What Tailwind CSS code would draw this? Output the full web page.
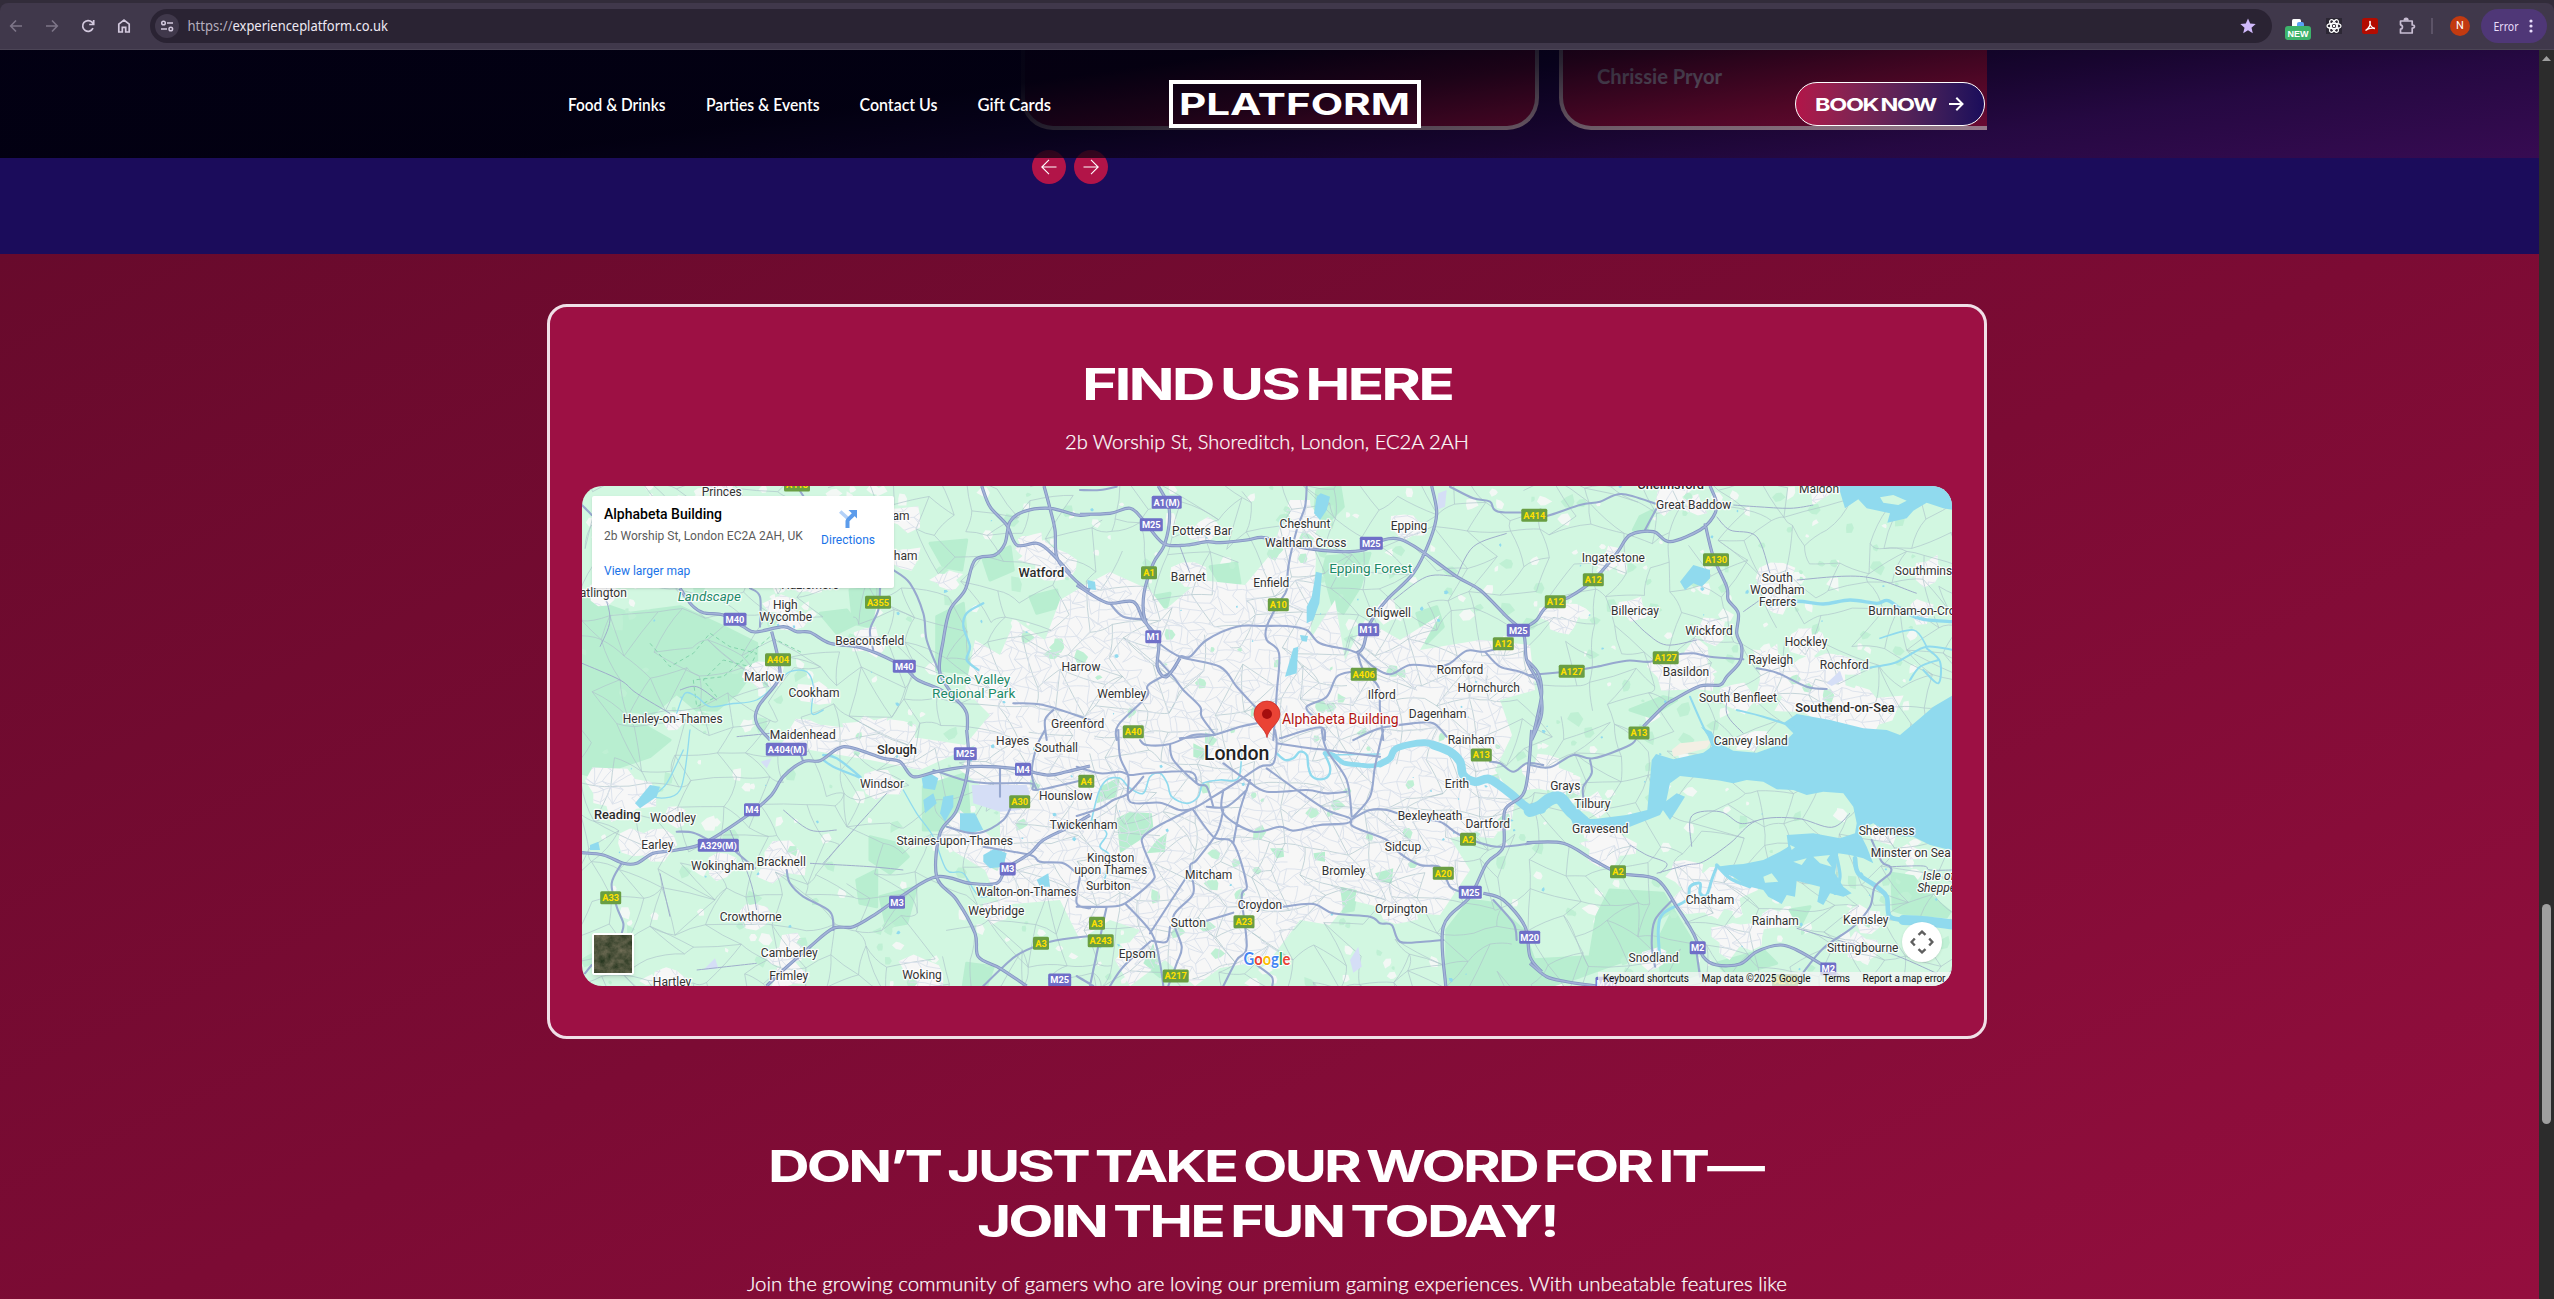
<!DOCTYPE html>
<html lang="en">
<head>
<meta charset="utf-8">
<title>Platform</title>
<script src="https://cdn.jsdelivr.net/npm/@tailwindcss/browser@4"></script>
</head>
<body class="w-[2554px] h-[1299px] overflow-hidden bg-[#6a0a2d] flex flex-col font-['Lato',sans-serif] text-white">

<!-- Browser toolbar -->
<div class="h-[50px] shrink-0 bg-[#322c3a] pt-[3px]">
  <div class="h-[47px] bg-[#40384b] border-b border-[#4c4556] rounded-t-lg flex items-center pl-2 pr-[6px]">
    <div class="flex items-center gap-5 pb-px">
      <svg class="w-4 h-4" viewBox="0 0 16 16" fill="none" stroke="#7d7588" stroke-width="1.6"><path d="M14 8H3M8 2.5 2.7 8 8 13.500"/></svg>
      <svg class="w-4 h-4" viewBox="0 0 16 16" fill="none" stroke="#7d7588" stroke-width="1.6"><path d="M2 8h11M8 2.500 13.300 8 8 13.500"/></svg>
      <svg class="w-4 h-4" viewBox="0 0 16 16" fill="none" stroke="#d3c9de" stroke-width="1.700"><path d="M13 10.200A5.400 5.400 0 1 1 12 4.200L13.500 6M13.700 2v4.500H9.200"/></svg>
      <svg class="w-4 h-4" viewBox="0 0 16 16" fill="none" stroke="#d3c9de" stroke-width="1.700"><path d="M2.800 14V6.200L8 2l5.200 4.200V14H9.700V9.300H6.300V14z"/></svg>
    </div>
    <div class="ml-[18px] w-[2122px] h-[34px] rounded-full bg-[#2a2333] flex items-center pl-[5px] pr-4 mb-px">
      <div class="w-6 h-6 rounded-full bg-[#40384b] flex items-center justify-center">
        <svg class="w-4 h-4" viewBox="0 0 16 16" fill="none" stroke="#d3c9de" stroke-width="1.500"><circle cx="4.500" cy="5" r="1.800"/><path d="M8 5h6M2 11h6"/><circle cx="11.800" cy="11" r="1.800"/></svg>
      </div>
      <svg class="w-[220px] h-6 ml-[8px] overflow-visible" viewBox="0 0 220 24" font-family="Noto Sans, sans-serif" font-size="13.500"><text x="0.500" y="17" fill="#b5aebd" textLength="45" lengthAdjust="spacingAndGlyphs">https://</text><text x="45.500" y="17" fill="#eee9f3" textLength="155.500" lengthAdjust="spacingAndGlyphs">experienceplatform.co.uk</text></svg>
      <svg class="w-4 h-4 ml-auto" viewBox="0 0 16 16" fill="#d0b9fb"><path d="M8 0.500l2.200 5.100 5.500.5-4.200 3.600 1.300 5.500L8 12.300l-4.800 2.900 1.300-5.500L.3 6.100l5.500-.5z"/></svg>
    </div>
    <div class="ml-[13px] flex items-center">
      <svg class="w-[26px] h-6 mt-[7px]" viewBox="0 0 26 24"><rect x="7" y="1" width="9" height="9" rx="1.500" fill="#fff"/><rect x="12" y="4" width="7" height="8" rx="2" fill="#5aa2f5"/><rect y="8" width="26" height="14" rx="3" fill="#3db36b"/><text x="13" y="18.800" fill="#fff" text-anchor="middle" font-family="Liberation Sans, sans-serif" font-weight="700" font-size="9.500" textLength="21" lengthAdjust="spacingAndGlyphs">NEW</text></svg>
      <svg class="w-4 h-4 ml-[15px]" viewBox="0 0 16 16"><rect width="16" height="16" fill="#2c2734"/><g fill="none" stroke="#fff" stroke-width="1.200"><ellipse cx="8" cy="8" rx="7" ry="2.700"/><ellipse cx="8" cy="8" rx="7" ry="2.700" transform="rotate(60 8 8)"/><ellipse cx="8" cy="8" rx="7" ry="2.700" transform="rotate(120 8 8)"/></g><circle cx="8" cy="8" r="1.200" fill="#fff"/></svg>
      <svg class="w-4 h-4 ml-5" viewBox="0 0 16 16"><rect width="16" height="16" rx="2.500" fill="#b30b00"/><path d="M8 3c1.200 3-1 7.500-4.500 9.500M8 3c-1 3 1 6.500 5 7.500-3.500-.8-6.500 0-9.500 2" fill="none" stroke="#fff" stroke-width="1.300"/></svg>
      <svg class="w-[18px] h-[18px] ml-5" viewBox="0 0 18 18" fill="none" stroke="#c8bdd3" stroke-width="1.700"><path d="M2.500 4h11.700v4c3 0 3 3 0 3v5H2.500v-3.800c2.600-.3 2.600-4.100 0-4.400z" stroke-linejoin="round"/><path d="M6.300 3.500c0-3 3.600-3 3.600 0" fill="#c8bdd3"/></svg>
      <div class="ml-[15px] w-[2px] h-4 bg-[#5c5367]"></div>
      <div class="ml-[17px] w-5 h-5 rounded-full bg-[#c23a10] text-[11px] font-['Roboto',sans-serif] flex items-center justify-center">N</div>
      <div class="ml-[11px] w-[66px] h-[34px] mb-px rounded-full bg-[#4f3777] flex items-center pl-3">
        <svg class="w-[26px] h-5 overflow-visible" viewBox="0 0 26 20"><text x="0.500" y="14.500" fill="#e9ddfb" font-family="Noto Sans, sans-serif" font-size="13" textLength="25" lengthAdjust="spacingAndGlyphs">Error</text></svg>
        <svg class="w-1 h-4 ml-[10px]" viewBox="0 0 4 16" fill="#e9ddfb"><circle cx="2" cy="3" r="1.600"/><circle cx="2" cy="8" r="1.600"/><circle cx="2" cy="13" r="1.600"/></svg>
      </div>
    </div>
  </div>
</div>

<div class="flex h-[1249px]">
  <div class="w-[2539px] relative">

    <!-- Testimonial slider end -->
    <section class="h-[204px] bg-[#1b0c5b] relative overflow-hidden">
      <div class="ml-[1021px] w-[966px] h-20 overflow-hidden flex gap-5">
        <div class="w-[518px] shrink-0 h-20 rounded-b-[32px] border-4 border-t-0 border-[#f0e0e7] bg-[#9d1044]"></div>
        <div class="w-[518px] shrink-0 h-20 rounded-b-[32px] border-4 border-t-0 border-[#f0e0e7] bg-[#9d1044]">
          <svg class="w-40 h-10 ml-[34px] mt-[8px]" viewBox="0 0 160 40"><text x="0" y="26" fill="#e6dceb" font-family="Lato, sans-serif" font-weight="700" font-size="20" textLength="125" lengthAdjust="spacingAndGlyphs">Chrissie Pryor</text></svg>
        </div>
      </div>
      <div class="ml-[1032px] mt-5 flex gap-[8px]">
        <div class="w-[34px] h-[34px] rounded-full bg-[#b21448] flex items-center justify-center"><svg class="w-4 h-4" viewBox="0 0 16 16" fill="none" stroke="#fff" stroke-width="1.100"><path d="M15.500 8H.8M8 .8.8 8 8 15.200"/></svg></div>
        <div class="w-[34px] h-[34px] rounded-full bg-[#b21448] flex items-center justify-center"><svg class="w-4 h-4" viewBox="0 0 16 16" fill="none" stroke="#fff" stroke-width="1.100"><path d="M.5 8h14.700M8 .8 15.200 8 8 15.200"/></svg></div>
      </div>
    </section>

    <!-- Sticky header laid over the slider -->
    <header class="absolute top-0 left-0 w-full h-[108px] bg-[linear-gradient(172deg,rgba(2,0,18,.99)_0%,rgba(2,0,16,.98)_38%,rgba(4,0,15,.84)_50%,rgba(22,0,16,.58)_66%,rgba(50,4,35,.45)_78%,rgba(107,9,66,.35)_100%)]">
      <div class="ml-[568px] w-[1417px] h-full flex items-center">
        <nav>
          <svg class="w-[490px] h-6 overflow-visible" viewBox="0 0 490 24" fill="#fff" font-family="Lato, sans-serif" font-weight="600" font-size="16.500"><text x="0" y="18.500" textLength="97.500" lengthAdjust="spacingAndGlyphs">Food &amp; Drinks</text><text x="138" y="18.500" textLength="113.500" lengthAdjust="spacingAndGlyphs">Parties &amp; Events</text><text x="291.500" y="18.500" textLength="78" lengthAdjust="spacingAndGlyphs">Contact Us</text><text x="409.500" y="18.500" textLength="73.500" lengthAdjust="spacingAndGlyphs">Gift Cards</text></svg>
        </nav>
        <div class="ml-[111px] w-[252px] h-[48px] border-4 border-white flex items-center justify-center">
          <svg class="w-[232px] h-8 overflow-visible" viewBox="0 0 232 32"><text x="0" y="27" fill="#fff" font-family="Inter, sans-serif" font-weight="700" font-size="30.500" textLength="231" lengthAdjust="spacingAndGlyphs">PLATFORM</text></svg>
        </div>
        <div class="ml-auto w-[190px] h-[44px] rounded-full border border-white bg-linear-to-r from-[#b21448] to-[#1b0c5b] flex items-center pl-[19px] pr-5 justify-between">
          <svg class="w-[122px] h-6 overflow-visible" viewBox="0 0 122 24"><text x="0" y="18.500" fill="#fff" font-family="Inter, sans-serif" font-weight="700" font-size="18" letter-spacing="-1" word-spacing="-1.500" textLength="121" lengthAdjust="spacingAndGlyphs">BOOK NOW</text></svg>
          <svg class="w-4 h-4" viewBox="0 0 16 16" fill="none" stroke="#fff" stroke-width="2"><path d="M1 8h13M8.300 1.800 14.500 8l-6.200 6.200"/></svg>
        </div>
      </div>
    </header>

    <section class="h-[1045px] bg-[linear-gradient(155deg,#680a2c_0%,#7c0b34_50%,#940e3e_100%)] flex flex-col items-center overflow-hidden">
      <div class="mt-[50px] -ml-[5px] w-[1440px] h-[735px] shrink-0 rounded-[20px] border-[3px] border-[#f0e0e7] bg-[#9d1044] flex flex-col items-center">
        <h2 class="mt-[52px]"><svg class="w-[370px] h-[56px] overflow-visible" viewBox="0 0 370 56"><text x="0" y="41" fill="#fff" font-family="Inter, sans-serif" font-weight="700" font-size="44.500" letter-spacing="-2.200" word-spacing="-3" textLength="370" lengthAdjust="spacingAndGlyphs">FIND US HERE</text></svg></h2>
        <p class="mt-[10px]"><svg class="w-[406px] h-8 overflow-visible" viewBox="0 0 406 32"><text x="1" y="24" fill="#fff" stroke="#fff" stroke-width=".25" font-family="Lato, sans-serif" font-weight="300" font-size="20.500" textLength="404" lengthAdjust="spacingAndGlyphs">2b Worship St, Shoreditch, London, EC2A 2AH</text></svg></p>

        <!-- Map -->
        <div class="mt-[29px] w-[1370px] h-[500px] rounded-[20px] overflow-hidden relative bg-[#d2f7e1]">
          <svg id="map" class="absolute inset-0 w-[1370px] h-[500px]" viewBox="582 486 1370 500" font-family="Roboto, sans-serif"></svg>

          <div class="absolute left-[10px] top-[10px] w-[302px] h-[92px] bg-white shadow-sm rounded-[2px] font-['Roboto',sans-serif] pl-3 pt-[9px] pr-[19px] flex justify-between">
            <div>
              <div class="text-[14px] leading-[18px] font-medium text-black">Alphabeta Building</div>
              <div class="mt-[5px] text-[12px] leading-4 text-[#5b5b5b]">2b Worship St, London EC2A 2AH, UK</div>
              <div class="mt-[19px] text-[12px] leading-4 text-[#1a73e8]">View larger map</div>
            </div>
            <div class="flex flex-col items-center pt-[5px]">
              <svg class="w-[18px] h-[18px]" viewBox="0 0 18 18" fill="none"><path d="M9.500 9 1.200 1.500" stroke="#b3d1f8" stroke-width="3.600"/><path d="M8.500 18v-7c0-1.500 5-5 6.800-7.500" stroke="#5c9ceb" stroke-width="4"/><path d="M9.500 0H18v8.500z" fill="#5c9ceb"/></svg>
              <div class="mt-[4px] text-[12px] leading-4 text-[#1a73e8]">Directions</div>
            </div>
          </div>

          <svg class="absolute left-[10px] top-[447px] w-[42px] h-[42px] shadow-md rounded-[2px]" viewBox="0 0 42 42"><filter id="sat" x="0" y="0" width="1" height="1" color-interpolation-filters="sRGB"><feTurbulence type="fractalNoise" baseFrequency=".13" numOctaves="4" seed="8"/><feColorMatrix values=".4 0 0 0 .11  .3 0 0 0 .18  .3 0 0 0 .09  0 0 0 0 1"/></filter><rect width="42" height="42" rx="2" fill="#fff"/><rect x="2" y="2" width="38" height="38" filter="url(#sat)"/></svg>

          <div class="absolute right-[10px] bottom-[24px] w-10 h-10 rounded-full bg-white shadow flex items-center justify-center"><svg class="w-6 h-6" viewBox="0 0 24 24" fill="none" stroke="#5f5f5f" stroke-width="2.400"><path d="M8.500 4.800 12 1.600l3.500 3.200M8.500 19.200l3.500 3.200 3.500-3.200M4.800 8.500 1.600 12l3.200 3.500M19.200 8.500l3.200 3.500-3.200 3.500"/></svg></div>

          <div class="absolute right-0 bottom-0 w-[354px] h-[14px] bg-[#f5f5f5]/75"><svg class="w-[354px] h-[14px]" viewBox="0 0 354 14" fill="#111" font-family="Roboto, sans-serif" font-size="10"><text x="5" y="10" textLength="86">Keyboard shortcuts</text><text x="103.500" y="10" textLength="109">Map data ©2025 Google</text><text x="225" y="10" textLength="27">Terms</text><text x="264.500" y="10" textLength="83">Report a map error</text></svg></div>
        </div>
      </div>

      <h2 class="mt-[92px] -ml-[8px]"><svg class="w-[1000px] h-[116px] overflow-visible" viewBox="0 0 1000 116" fill="#fff" font-family="Inter, sans-serif" font-weight="700" font-size="44.500" letter-spacing="-2.200" word-spacing="-3"><text x="2" y="50.500" textLength="994" lengthAdjust="spacingAndGlyphs">DON’T JUST TAKE OUR WORD FOR IT—</text><text x="211" y="105.500" textLength="580" lengthAdjust="spacingAndGlyphs">JOIN THE FUN TODAY!</text></svg></h2>
      <p class="mt-[18px] -ml-[6px]"><svg class="w-[1044px] h-[38px] overflow-visible" viewBox="0 0 1044 38"><text x="2" y="26" fill="#fff" stroke="#fff" stroke-width=".25" font-family="Lato, sans-serif" font-weight="300" font-size="20.500" textLength="1040" lengthAdjust="spacingAndGlyphs">Join the growing community of gamers who are loving our premium gaming experiences. With unbeatable features like</text></svg></p>
    </section>
  </div>

  <!-- Page scrollbar -->
  <div class="w-[15px] bg-[#2c2c2c] flex flex-col items-center">
    <svg class="w-[9px] h-[5px] mt-[6px]" viewBox="0 0 9 5" fill="#9f9f9f"><path d="M4.500 0 9 5H0z"/></svg>
    <div class="mt-[843px] w-[9px] h-[220px] rounded-full bg-[#9f9f9f]"></div>
  </div>
</div>

<script>
const svg = document.getElementById('map');
// Survey sheets: each sheet has its own origin and a 3:1 scale.
const SHEET = {A:[570,480],B:[1080,480],C:[1530,480],D:[570,730],E:[1080,730],F:[1530,730]};
let seed = 7;
const rnd = () => { seed = seed + 0x6D2B79F5 | 0; let t = Math.imul(seed ^ seed >>> 15, 1 | seed); t = t + Math.imul(t ^ t >>> 7, 61 | t) ^ t; return ((t ^ t >>> 14) >>> 0) / 4294967296; };
const at = (k, x, y) => [SHEET[k][0] + x / 3, SHEET[k][1] + y / 3];
const pts = s => s.slice(2).trim().split(/\s+/).map(p => { const [x, y] = p.split(',').map(Number); return at(s[0], x, y); });
const f = n => n.toFixed(1);
const straight = p => 'M' + p.map(q => f(q[0]) + ' ' + f(q[1])).join('L');
const smooth = p => {
  let d = 'M' + f(p[0][0]) + ' ' + f(p[0][1]);
  for (let i = 0; i < p.length - 1; i++) {
    const a = p[i - 1] || p[i], b = p[i], c = p[i + 1], e = p[i + 2] || c;
    d += 'C' + [b[0] + (c[0] - a[0]) / 6, b[1] + (c[1] - a[1]) / 6, c[0] - (e[0] - b[0]) / 6, c[1] - (e[1] - b[1]) / 6, c[0], c[1]].map(f).join(' ');
  }
  return d;
};
const blob = (x, y, r, n = 9, sq = 1) => { const p = []; for (let i = 0; i < n; i++) { const a = i / n * 6.283, q = r * (0.5 + rnd() * 0.75); p.push([x + Math.cos(a) * q, y + Math.sin(a) * q * sq]); } return straight(p) + 'Z'; };
const path = (d, a) => `<path d="${d}" ${a}/>`;

const towns = `B -7 744 Greenford|B 3 574 Harrow|A 455 48 Princes|A 993 121 am|A 1007 241 ham|A 720 327 Hazlemere|A 100 352 atlington|A 646 388 High|A 647 423 Wycombe|A 899 496 Beaconsfield|A 582 604 Marlow|A 732 652 Cookham|A 308 730 Henley-on-Thames|A 698 778 Maidenhead|B 366 166 Potters Bar|B 675 145 Cheshunt|B 677 201 Waltham Cross|B 987 151 Epping|B 325 304 Barnet|B 574 321 Enfield|B 925 411 Chigwell|B 1140 583 Romford|B 1226 637 Hornchurch|B 905 658 Ilford|B 1073 715 Dagenham|B 125 655 Wembley|C 491 87 Great Baddow|C 867 40 Maldon|C 250 247 Ingatestone|C 742 307 South|C 742 342 Woodham|C 743 378 Ferrers|C 1202 286 Southminster|C 315 406 Billericay|C 1175 406 Burnham-on-Crouch|C 537 465 Wickford|C 828 499 Hockley|C 722 552 Rayleigh|C 943 567 Rochford|C 468 588 Basildon|C 624 667 South Benfleet|F 662 45 Canvey Island|D 1328 46 Hayes|D 1459 66 Southall|D 936 174 Windsor|E -43 210 Hounslow|D 309 277 Woodley|D 262 357 Earley|D 458 420 Wokingham|D 634 408 Bracknell|D 1154 345 Staines-upon-Thames|E 11 297 Twickenham|D 1369 498 Walton-on-Thames|D 1279 555 Weybridge|D 542 573 Crowthorne|D 658 681 Camberley|D 656 750 Frimley|D 1056 747 Woking|D 306 767 Hartley|E 1131 174 Erith|E 1174 43 Rainham|E 1050 271 Bexleyheath|E 1223 294 Dartford|E 969 363 Sidcup|E 92 396 Kingston|E 92 432 upon Thames|E 85 480 Surbiton|E 386 447 Mitcham|E 791 436 Bromley|E 964 550 Orpington|E 540 537 Croydon|E 325 591 Sutton|E 172 684 Epsom|F 106 180 Grays|F 187 235 Tilbury|F 211 309 Gravesend|F 540 522 Chatham|F 736 585 Rainham|F 1007 582 Kemsley|F 998 667 Sittingbourne|F 371 697 Snodland|F 1070 315 Sheerness|F 1142 381 Minster on Sea`.split('|').map(s => { const [k, x, y, ...n] = s.split(' '); return {k, x:+x, y:+y, n:n.join(' ')}; });
const shields = `A 681 15 A413|A 495 418 M40|A 924 367 A355|A 624 539 A404|A 1003 559 M40|B 260 67 A1(M)|B 214 134 M25|B 207 278 A1|B 220 470 M1|B 595 374 A10|B 874 190 M25|B 866 449 M11|B 1315 451 M25|B 1270 491 A12|B 851 583 A406|B 160 755 A40|B 1363 106 A414|C 558 239 A130|C 190 299 A12|C 76 365 A12|C 407 533 A127|C 125 574 A127|C 327 759 A13|D 649 58 A404(M)|D 1186 71 M25|D 1359 118 M4|E 19 154 A4|D 1349 215 A30|D 546 239 M4|D 445 346 A329(M)|D 122 503 A33|D 1313 417 M3|D 981 517 M3|D 1413 640 A3|D 1469 750 M25|E 1204 75 A13|E 1164 328 A2|E 1090 430 A20|E 1171 487 M25|E 492 575 A23|E 51 580 A3|E 62 632 A243|E 287 738 A217|E 1349 622 M20|F 264 425 A2|F 503 653 M2|F 895 717 M2|F 228 760 M20|F 765 752 A249`.split('|').map(s => s.split(' '));

const forest = ['A 36,350 180,400 330,380 460,440 560,490 560,560 500,640 440,690 380,690 320,640 250,700 120,690 36,640','A 40,640 230,740 300,780 240,830 150,860 110,900 36,880','A 1080,190 1190,180 1175,270 1120,260','A 840,330 930,325 900,440 850,430','A 750,400 830,390 860,430 800,460','A 1100,410 1180,370 1190,480 1200,580 1100,570','A 1240,240 1320,200 1330,270 1260,300','A 1380,350 1460,330 1470,380 1400,400','B 740,230 870,220 840,320 790,400 760,380 730,270','B 710,30 780,20 790,80 740,130 705,100','B 390,260 470,250 480,310 420,310','B 210,350 270,340 260,380 215,375','B 1010,400 1070,380 1090,440 1040,490','B 620,540 680,560 660,620 700,680 740,740 690,720 640,650','B 1120,660 1180,650 1150,720','C 330,110 370,90 350,150 310,150','C 300,690 400,650 440,660 360,710','D 1060,170 1190,130 1200,300 1060,300','D 900,320 980,340 1015,380 960,430 900,390','D 930,500 1040,470 1010,580 950,590','D 860,450 920,420 920,530 870,520','D 1190,700 1270,710 1250,768 1180,768','E 110,265 150,245 215,250 220,290 180,330 120,370','E 60,170 120,140 110,200 50,220','E 200,370 230,330 260,310 255,365','E 1100,600 1170,510 1240,520 1330,600 1380,740 1380,768 1100,768','E 780,470 830,480 820,540 790,545','E 570,355 610,355 612,380 590,385','E 700,370 735,365 735,395 705,390','E 885,430 940,415 935,460 900,455','E 190,700 220,640 240,740','E 340,40 380,60 370,90 340,80','F 240,480 400,490 430,540 380,570 380,660 260,700 150,740 60,768 0,768 0,690 180,680 200,560','F 430,540 490,640 510,730 400,768 380,640','F 1085,430 1150,440 1180,480 1260,545 1250,560 1120,550 1090,540','F 780,540 840,530 810,590','F 560,700 700,660 740,700 600,740'];
const urban = straight([[1085,585],[1110,572],[1150,590],[1165,610],[1200,580],[1245,585],[1270,555],[1290,500],[1310,500],[1316,560],[1310,640],[1335,600],[1345,660],[1365,620],[1400,640],[1440,615],[1420,650],[1480,640],[1530,645],[1535,690],[1500,700],[1512,735],[1495,770],[1515,800],[1510,830],[1450,838],[1470,870],[1440,915],[1400,912],[1350,900],[1330,925],[1300,920],[1270,960],[1220,968],[1195,986],[1165,960],[1130,986],[1115,960],[1140,930],[1110,920],[1080,940],[1060,900],[1000,905],[985,870],[960,855],[935,840],[960,810],[1000,845],[1000,800],[960,770],[975,745],[920,770],[870,760],[780,745],[800,722],[880,732],[965,745],[990,715],[965,690],[975,640],[1000,655],[1015,620],[1045,640],[1060,600]]) + 'Z';

// Built-up areas around each place
let built = urban;
const R = {Basildon:26, Bracknell:26, Chatham:32, Wycombe:24, Billericay:16, Camberley:22, Woking:24};
towns.forEach(t => { const [x, y] = at(t.k, t.x, t.y); built += blob(x, y - 4, R[t.n] || 13 + rnd() * 7, 10, .8); });
[['D',150,190,38],['D',230,340,24],['D',980,40,30],['D',900,10,26],['C',100,410,24],['C',470,560,34],['C',900,560,20],['C',880,640,44],['C',1000,690,38],['C',760,600,36],['F',230,340,28],['F',560,480,38],['F',620,620,26],['F',480,440,22],['A',1440,240,26],['A',1380,190,20],['A',1130,300,16],['F',40,130,26],['C',420,50,24]].forEach(b => { const [x, y] = at(b[0], b[1], b[2]); built += blob(x, y, b[3], 14, .75); });
let fleck = '', park = '', pond = '';
for (let i = 0; i < 420; i++) fleck += blob(582 + rnd() * 1370, 486 + rnd() * 500, 2 + rnd() * 6, 6);
for (let i = 0; i < 260; i++) park += blob(582 + rnd() * 1370, 486 + rnd() * 500, 2 + rnd() * 6, 6);
for (let i = 0; i < 110; i++) pond += blob(582 + rnd() * 1370, 486 + rnd() * 500, .8 + rnd() * 1.6, 5);

// Irregular street lattice
function lattice(step, keep) {
  const cols = Math.ceil(1370 / step) + 2, rows = Math.ceil(500 / step) + 2, g = [];
  for (let r = 0; r < rows; r++) { g.push([]); for (let c = 0; c < cols; c++) g[r].push([576 + (c + (rnd() - .5) * .95) * step + (r % 2) * step / 2, 480 + (r + (rnd() - .5) * .95) * step]); }
  let d = '';
  const seg = (a, b) => { const m = [(a[0] + b[0]) / 2 + (rnd() - .5) * step * .3, (a[1] + b[1]) / 2 + (rnd() - .5) * step * .3]; d += 'M' + f(a[0]) + ' ' + f(a[1]) + 'Q' + f(m[0]) + ' ' + f(m[1]) + ' ' + f(b[0]) + ' ' + f(b[1]); };
  for (let r = 0; r < rows - 1; r++) for (let c = 0; c < cols - 1; c++) {
    if (rnd() < keep) seg(g[r][c], g[r][c + 1]);
    if (rnd() < keep) seg(g[r][c], g[r + 1][c]);
    if (rnd() < keep * .2) seg(g[r][c], g[r + 1][c + 1]);
  }
  return d;
}
const country = lattice(28, .72);
const city = lattice(10, .8);

const sea = ['F 110,235 150,268 200,266 290,255 352,240 360,150 365,90 378,72 430,88 520,68 545,50 530,10 512,-10 545,5 560,35 610,62 680,68 760,40 790,10 760,-20 800,-48 900,-30 1000,-5 1070,0 1110,15 1170,-35 1210,-70 1270,-105 1270,362 1200,345 1150,320 1090,318 1030,280 985,300 1010,350 1030,400 1000,385 960,375 925,370 915,430 940,470 965,490 940,500 900,490 880,525 862,515 870,470 800,452 795,500 770,495 755,522 715,500 700,480 650,468 610,440 580,430 560,410 600,405 640,402 700,390 750,365 775,350 770,315 850,310 930,325 975,310 980,280 970,230 940,190 880,185 830,195 790,180 740,178 700,155 650,150 610,160 560,150 450,138 420,160 405,230 390,255 300,290 200,300 130,285','C 925,18 945,85 985,58 1010,85 1080,100 1072,128 1130,115 1150,92 1190,68 1240,85 1270,90 1270,15','C 450,305 490,255 540,270 540,295 515,320 490,310 465,330','B 710,50 722,40 750,50 740,90 720,120 702,100','B 708,275 726,280 718,370 700,420 680,430 680,380 695,350','B 660,465 684,468 680,485 665,483','B 640,505 655,500 650,580 615,590','B 22,300 45,305 48,330 25,328','D 1055,145 1080,130 1105,145 1095,180 1060,175','D 1120,200 1150,195 1150,230 1125,275 1110,250','D 1170,250 1215,250 1240,300 1200,310 1170,300','D 1240,375 1275,355 1310,370 1300,410 1260,415 1240,395','D 1060,210 1090,190 1100,220 1065,250','D 1400,450 1435,430 1440,470 1410,470','D 195,220 240,165 270,170 260,200 210,235','D 60,345 85,335 90,360 60,360','F 400,220 440,190 465,200 440,240 420,270 395,235'];
const rivers = [[7,'E 590,70 615,90 640,85 660,65 680,75 685,110 695,138 720,148 745,138 750,110 735,75'],[14,'E 735,70 760,75 790,98 840,105 880,107 920,95'],[20,'E 900,102 930,85 950,55 1030,38 1075,50'],[26,'E 1060,45 1110,65 1140,95 1150,135 1185,155 1230,148 1290,190 1345,235 1385,238'],[38,'F 0,242 30,230 60,208 90,205 120,240 160,275'],[5,'E 40,270 80,310 60,350 90,380 70,460'],[5,'E 30,290 55,190 80,150 120,145 150,175 190,190 210,140 240,130 262,160 275,200 320,220 355,200 370,160 420,150 475,145 485,60'],[4,'E 745,75 900,72'],[4,'A 320,700 345,640 380,650 420,680 480,672 560,660 620,610 660,575 710,575 730,620 725,700 760,690'],[7,'A 1240,370 1190,400 1180,440 1200,500 1190,540 1225,570'],[7,'D 760,90 790,110 850,135 870,140 800,85 760,75'],[4,'D 1000,180 1040,250 1090,320 1130,420 1180,430 1230,500 1300,480'],[4,'D 340,60 290,160 250,200 330,180 360,0'],[10,'C 720,378 800,364 880,372 960,360 1040,370 1075,362 1130,400 1180,418 1270,425'],[6,'C 990,568 1090,550 1130,530 1190,500 1270,510'],[5,'C 1190,500 1150,450 1050,475'],[6,'C 1190,505 1230,545 1225,610 1180,570'],[6,'C 1225,540 1170,560 1140,600'],[9,'F 560,410 545,450 530,495 510,490 510,460 480,470 470,510 400,550 385,600 390,690'],[10,'F 560,405 600,445 660,470'],[14,'F 975,385 985,430 1040,470 1070,500 1080,560 1140,570'],[30,'F 1120,570 1200,575 1275,585'],[10,'F 920,380 930,440 915,490'],[6,'C 480,650 520,740 545,780'],[6,'C 620,690 700,710 790,740']];
const motor = ['A 330,325 365,375 400,398 460,405 520,440 555,456 640,440 680,455 720,457 780,490 860,500 920,520 1000,560 1040,598 1110,628 1165,665 1190,700 1192,750','A 1560,103 1520,105 1440,85 1360,95 1320,125 1305,190 1275,225 1215,240 1185,330 1140,390 1120,480 1110,580 1165,665','A 1422,18 1440,85 1455,150 1460,230 1495,280 1545,325 1560,330','A 1235,18 1260,80 1310,135 1340,195 1400,190 1440,215 1500,280','A 605,455 625,540 625,600 565,680 560,730 600,780','B 0,103 90,100 150,85 190,120 250,190 320,195 380,185 420,188 500,180 545,172 600,185 680,205 780,215 850,210 910,180 960,178 1020,210 1130,290 1200,330 1280,410 1330,460 1340,540 1375,610 1385,700 1355,780','B 235,18 268,90 255,190 220,250 192,340 195,420 235,480','B -10,315 80,368 160,365 190,420 235,480 232,560 260,590 300,535','B 1055,18 1070,100 1050,180 1000,280 920,360 870,430 850,500 832,520','C 540,18 560,70 550,110 510,150 420,185 370,155 300,165 260,220 190,300 120,350 50,380 20,420 -10,440','C 525,130 550,230 590,320 595,360 625,400 620,460 635,500 630,545 590,590 570,615 510,618 430,660 400,680 340,740','C -10,540 25,580 35,640 20,720 5,780','D 36,368 100,375 160,400 200,400 250,370 320,360 400,340 520,265 600,200 640,140 700,95 750,92 800,58 840,52 940,85 990,95 1030,140 1100,125 1200,110 1330,115 1430,135 1490,125 1560,108','D 590,768 640,720 720,650 790,595 850,590 920,550 1000,495 1100,440 1200,460 1280,460 1310,415 1380,370 1420,330 1500,290 1560,255','D 1190,0 1195,110 1160,240 1110,310 1100,440 1160,510 1215,610 1225,680 1290,715 1370,768','E 1355,0 1335,180 1275,240 1270,350 1220,400 1170,500 1090,590 1097,768','E 1210,490 1270,510 1335,590 1350,680 1385,725','F -10,338 100,340 190,390 270,430 380,448 440,530 490,610 520,680 560,705 630,702 680,665 750,645 800,660 870,700 930,740','F 0,700 50,740 110,755 200,768'];
const main = ['A 930,325 925,390 900,450 910,510','A 970,270 1020,310 1060,400 1070,480 1105,570','A 540,325 570,350 570,440','A 36,75 65,105','A 1330,670 1420,675 1560,720','A 1430,780 1425,720 1450,690','A 680,18 700,48','B 90,370 130,410 200,418','B 235,540 280,590 310,630 360,680 365,710 405,765','B 110,780 115,735 200,650 205,615 280,570 300,530 330,530 380,480 470,440 550,438 620,438 680,450 720,490 800,508 835,520','B 230,485 300,530 420,560 470,620 525,680','B 680,18 675,80 650,150 625,260 620,330 595,370 560,440 560,480 597,520 590,640 580,780','B 832,515 850,570 895,620 900,690 910,780','B 832,515 880,560 930,583 990,555 1070,560 1110,550 1160,512 1215,515 1290,495','B 1215,515 1260,560 1320,575 1375,600','B 815,575 770,590 740,650 680,680 700,710','B 600,775 720,742 735,780','B 820,780 900,745 1000,730 1060,730 1100,770','B 300,775 400,765 480,740 530,730','B 1110,20 1180,55 1230,65 1255,95 1380,97','B 0,30 60,30 110,20','C 0,112 50,108 150,75 210,65 275,42 380,72','C 380,85 345,150','C 0,585 130,572 200,560 290,542 360,545 430,525 490,520 540,530 640,538','C 680,565 740,578 830,620 890,627','D 155,400 125,460 140,530 160,580 155,610','D 320,305 370,308 425,335','D 480,350 555,415','D 650,420 660,460 700,500 780,545 790,600','D 1240,768 1300,710 1350,670 1440,635 1560,618','D 1240,350 1380,375 1410,395 1480,400 1520,430','D 1130,290 1220,310 1300,270 1330,210','D 1090,120 1180,150 1250,160 1380,160 1400,180 1560,145','D 1290,110 1290,200','D 700,95 690,70','D 1530,440 1520,520 1560,535','D 45,730 65,705','D 1425,0 1400,50 1385,130 1400,180','E -10,738 40,768','E -10,110 60,130 120,125 150,135 200,130 330,125 350,160','E -10,258 60,235 100,210 145,190 190,140','E 115,0 120,80 145,140 150,215 240,218 300,240 340,235 400,200 480,150 540,110 580,100 590,40 585,0','E 180,30 200,45 270,42 340,15 400,15','E 270,42 280,90 350,160 380,170 400,230','E -10,530 80,530 135,520 215,455 220,425 190,350 190,320 240,285 340,235','E 340,240 400,320 460,340 500,465 485,500 500,650 470,690 430,768','E 510,150 480,240 460,340','E 380,230 440,230 500,180','E 430,240 410,310 350,390 330,410 340,490 280,560 305,650 290,700 265,768','E 320,440 210,610','E 135,520 215,610 240,700 250,768','E 215,632 260,635 270,590','E 380,572 460,548','E 430,180 430,250 520,305 600,290 640,302 720,285 800,280 820,265 870,240 920,240 1000,265 1080,275 1140,315 1250,350 1380,335','E 560,115 650,180 740,240 810,265 820,290 920,330 960,370 1020,405 1080,412 1110,470 1140,485','E 430,100 500,150 560,185 680,180 740,190 800,185','E 725,0 740,60 800,150 815,260','E 910,0 885,110 870,200 820,260','E 590,40 690,55 740,60 900,80','E 1240,510 1300,580 1310,630','E 610,530 700,522 760,550 870,560 900,580 935,585 960,635 1030,635 1090,630','E 80,530 65,600 30,768','E 90,768 130,710 210,635','E 530,705 575,740 577,768','E 1230,95 1260,100 1300,125 1340,100 1390,105','F 0,105 60,112 130,75 190,85 300,45 320,20','F 180,90 185,130 160,170 160,200','F 810,740 880,655 970,590 1020,530 1035,470 1080,430 1080,410 1055,395 1025,330','F 425,512 375,570 365,640 375,710','F 500,670 510,740'];
const minor = ['F 380,430 470,405 520,395 600,340 680,272 800,265 905,292 960,250','F 300,345 350,375 410,400 390,430','F 800,595 940,635 1080,670 1220,730','F 1080,410 1180,408 1200,420 1270,420','F 485,350 485,258 570,245 630,280 680,272','C 610,75 680,80 780,85 850,75','C 560,110 600,150 680,170 720,280','C 300,410 350,460 410,495 500,480','C 640,395 690,360','C 800,300 1000,290 1160,340','C 600,620 590,700 640,760','A 36,550 150,600 200,640 300,700','A 100,330 120,420 90,500','A 330,630 380,620 440,660','D 500,20 600,10','D 720,400 900,410 1000,420','D 480,300 540,450 560,540','D 640,240 720,300 800,300','D 950,190 760,400','D 380,720 560,700','D 270,430 300,560','B 300,200 330,280','B 940,360 1040,290 1130,290','B 1130,290 1180,200 1280,160'];

let out = path(fleck, 'fill="#f3f8f5"');
out += forest.map(s => path(straight(pts(s)) + 'Z', 'fill="#b8eed0" stroke="#b8eed0" stroke-width="3" stroke-linejoin="round"')).join('');
out += `<clipPath id="built">${path(built, '')}</clipPath>`;
out += path(built, 'fill="#f7f7f7"');
out += path(park, 'fill="#bff0d4"');
out += forest.slice(22, 32).map(s => path(straight(pts(s)) + 'Z', 'fill="#b8eed0"')).join('');
out += path(country, 'fill="none" stroke="#afc5cc" stroke-width=".7"');
out += `<g clip-path="url(#built)">${path(city, 'fill="none" stroke="#dae1eb" stroke-width=".9"')}</g>`;
out += path(straight(pts('A 240,490 300,560 370,520 420,460 480,500 560,520 540,560 460,540 400,600 440,650 380,680 370,600 460,590 600,470 700,520')), 'fill="none" stroke="#7ed0a8" stroke-width=".9" stroke-dasharray="4 3"');
out += path(straight(pts('D 1205,165 1370,165 1380,190 1350,240 1290,245 1210,220')) + 'Z' + straight(pts('D 400,720 435,685 445,715')) + 'Z' + straight(pts('C 890,610 930,572 940,600 905,618')) + 'Z' + straight(pts('E 810,690 835,650 845,710 820,728')) + 'Z' + straight(pts('B 1075,40 1100,30 1095,80 1070,90')) + 'Z' + straight(pts('D 572,95 605,85 590,115')) + 'Z', 'fill="#d5def6"');
out += path(straight(pts('F 425,60 450,40 545,30 530,55 430,80')) + 'Z', 'fill="#f3efe4"');
out += path(pond, 'fill="#90daee"');
out += sea.map(s => path(straight(pts(s)) + 'Z', 'fill="#90daee"')).join('');
out += path(['C 1050,52 1090,45 1130,62 1105,75 1060,68','F 700,440 725,430 745,455 705,458','F 780,345 795,352 785,360','F 790,395 830,385 815,405','F 850,380 900,375 890,390 905,410 870,400'].map(s => straight(pts(s)) + 'Z').join(''), 'fill="#d2f7e1"');
out += rivers.map(r => path(smooth(pts(r[1])), `fill="none" stroke="#90daee" stroke-width="${r[0] / 3}" stroke-linecap="round"`)).join('');
out += path(minor.map(s => smooth(pts(s))).join(''), 'fill="none" stroke="#9fadcb" stroke-width="1"');
out += path(main.map(s => smooth(pts(s))).join(''), 'fill="none" stroke="#97a8cf" stroke-width="2.1" stroke-linecap="round" stroke-linejoin="round"');
out += path(motor.map(s => smooth(pts(s))).join(''), 'fill="none" stroke="#8496c2" stroke-width="3.2" stroke-linejoin="round"');
out += path(motor.map(s => smooth(pts(s))).join(''), 'fill="none" stroke="#a3b3d8" stroke-width="1.6" stroke-linejoin="round"');

shields.forEach(([k, x, y, n]) => {
  const [cx, cy] = at(k, +x, +y), w = {2:16, 3:21, 4:26, 5:30, 7:41}[n.length] + (n === 'M25' || n === 'M40' ? 2 : 0), m = n[0] === 'M' || n.includes('(');
  out += `<rect x="${f(cx - w / 2)}" y="${f(cy - 6.5)}" width="${w}" height="13" rx="1.500" fill="${m ? '#6f6fc8' : '#6a9e42'}"/><text x="${f(cx)}" y="${f(cy + 3.3)}" text-anchor="middle" font-size="9.300" font-weight="700" fill="${m ? '#fff' : '#ffe000'}">${n}</text>`;
});
const label = (k, x, y, n, size, fill, extra = '') => { const [a, b] = at(k, x, y); out += `<text x="${f(a)}" y="${f(b)}" text-anchor="middle" font-size="${size}" fill="${fill}" stroke="#fff" stroke-width="2.500" stroke-opacity=".85" stroke-linejoin="round" paint-order="stroke" ${extra}>${n}</text>`; };
towns.forEach(t => label(t.k, t.x, t.y, t.n, 12, '#333'));
[['A',1414,290,'Watford'],['C',422,28,'Chelmsford'],['C',945,695,'Southend-on-Sea'],['D',981,71,'Slough'],['D',142,266,'Reading']].forEach(a => label(...a, 12.8, '#2b2b2b', 'font-weight="500"'));
label('E', 470, 90, 'London', 19.5, '#222', 'font-weight="500"');
label('A', 418, 363, 'Landscape', 13.3, '#1d8a68', 'font-style="italic"');
[['A',1210,612,'Colne Valley'],['A',1211,653,'Regional Park'],['B',872,278,'Epping Forest']].forEach(a => label(...a, 13.6, '#1d8a68'));
label('F', 1226, 450, 'Isle of', 12, '#333', 'font-style="italic"');
label('F', 1228, 486, 'Sheppey', 12, '#333', 'font-style="italic"');
label('B', 781, 733, 'Alphabeta Building', 14, '#b31412');
out += `<path d="M1267 737.600C1265.500 728 1254 723.500 1254 714a13 13 0 0 1 26 0C1280 723.500 1268.500 728 1267 737.600Z" fill="#ea4335" stroke="#c5221f" stroke-width=".7"/><circle cx="1267" cy="714" r="5" fill="#a50e0e"/>`;
out += `<text x="1243.500" y="964.500" font-family="Lato, sans-serif" font-weight="700" font-size="16.500" textLength="47" stroke="#fff" stroke-width="2" paint-order="stroke" lengthAdjust="spacingAndGlyphs"><tspan fill="#4285f4">G</tspan><tspan fill="#ea4335">o</tspan><tspan fill="#fbbc04">o</tspan><tspan fill="#4285f4">g</tspan><tspan fill="#34a853">l</tspan><tspan fill="#ea4335">e</tspan></text>`;
svg.innerHTML = out;
</script>
</body>
</html>
